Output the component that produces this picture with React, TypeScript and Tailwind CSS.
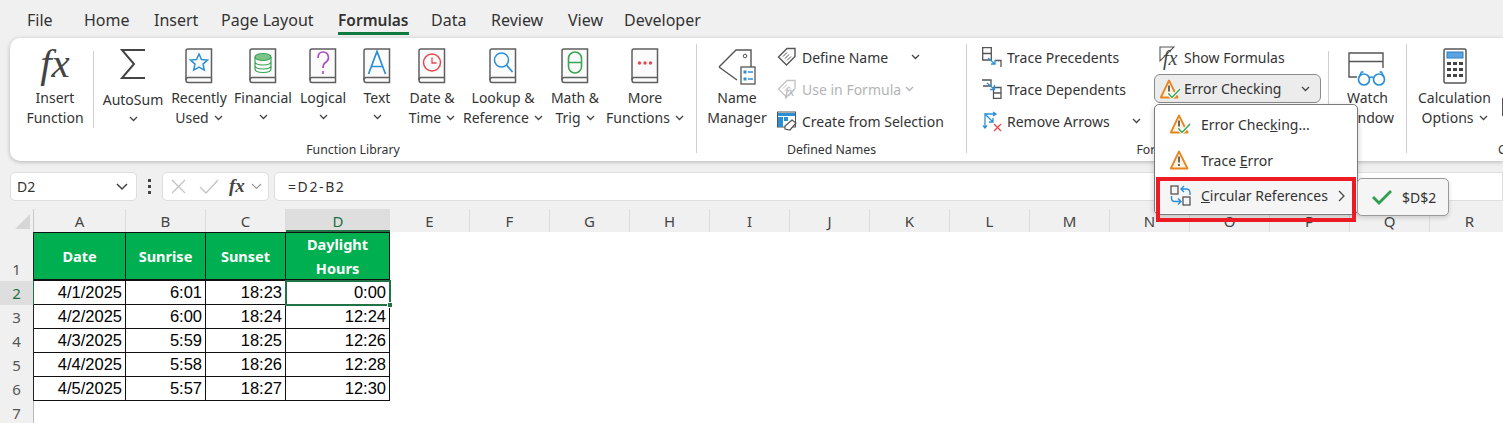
import { FC, ReactNode } from 'react'

const Chev: FC<{ className?: string }> = ({ className = '' }) => (
  <svg width="9" height="6" viewBox="0 0 9 6" className={`inline-block ${className}`}>
    <path d="M1 1l3.5 3.5L8 1" fill="none" stroke="#444" strokeWidth="1.3" />
  </svg>
)

const Book: FC<{ children: ReactNode }> = ({ children }) => (
  <svg width="28" height="36" viewBox="0 0 28 36">
    <path d="M3 1H26.5V34.5H3Q1 34.5 1 32V3Q1 1 3 1Z" fill="#fbfbfb" stroke="#5f5f5f" strokeWidth="1.5" />
    <path d="M1 32Q1 29.500 3 29.500H26.500" fill="none" stroke="#5f5f5f" strokeWidth="1.5" />
    {children}
  </svg>
)

const Warn: FC<{ check?: boolean }> = ({ check }) => (
  <svg width="22" height="20" viewBox="0 0 22 20">
    <path d="M9 1.500L17.500 18.500H.8Z" fill="#fdf3e3" stroke="#e8851e" strokeWidth="1.800" strokeLinejoin="round" />
    <path d="M9 6.500V12.500M9 14V16" stroke="#444" strokeWidth="1.600" />
    {check && <path d="M8.500 14.500l3.500 4 8-8.500" fill="none" stroke="#fff" strokeWidth="3.500" />}
    {check && <path d="M8.500 14.500l3.500 4 8-8.500" fill="none" stroke="#3aa655" strokeWidth="1.500" />}
  </svg>
)

const TagIcon: FC<{ gray?: boolean }> = ({ gray }) => (
  <svg width="20" height="20" viewBox="0 0 20 20">
    <path d="M1.500 10L10 1.500H18V9.500L9.500 18Z" fill="none" stroke={gray ? '#c4c4c4' : '#555'} strokeWidth="1.400" />
    <path d="M6 9.500l4-4M8 11.500l4-4M10 13.500l4-4" stroke={gray ? '#c4c4c4' : '#555'} strokeWidth="1" />
  </svg>
)

const TraceP = () => (
  <svg width="20" height="20" viewBox="0 0 20 20">
    <path d="M.7.7H9.300V13H.7ZM.7 6.500H9.300" fill="#fff" stroke="#555" strokeWidth="1.300" />
    <path d="M13 13.500H19V20" fill="none" stroke="#555" strokeWidth="1.300" />
    <path d="M6 11l7 6M13 13v4H9" fill="none" stroke="#2b8fd8" strokeWidth="1.300" />
  </svg>
)

const TraceD = () => (
  <svg width="20" height="20" viewBox="0 0 20 20">
    <path d="M0 1H9V7H1" fill="none" stroke="#555" strokeWidth="1.300" />
    <path d="M11.500 8.500H19V19.500H11.500ZM11.500 14H19" fill="#fff" stroke="#555" strokeWidth="1.300" />
    <path d="M5 4l7 6M12.500 6v4.500H8" fill="none" stroke="#2b8fd8" strokeWidth="1.300" />
  </svg>
)

const RemoveArrows = () => (
  <svg width="21" height="21" viewBox="0 0 21 21">
    <path d="M3 2v15M1 14.500L3 17l2-2.500M3 3h11M11 1l3 2-3 2M4 4l7 7M7 11h4V7" fill="none" stroke="#2b8fd8" strokeWidth="1.300" />
    <path d="M12 13l7 7M19 13l-7 7" stroke="#e5484d" strokeWidth="1.400" />
  </svg>
)

const Circular = () => (
  <svg width="21" height="21" viewBox="0 0 21 21">
    <rect x="1" y="1" width="7" height="8" fill="none" stroke="#555" strokeWidth="1.300" />
    <rect x="13" y="12" width="7" height="8" fill="none" stroke="#555" strokeWidth="1.300" />
    <path d="M14 1L11 4l3 3M11.500 4H16Q20 4 20 8V10M8 19.500l3-3-3-3M10.500 16.500H5Q1.500 16.500 1.500 13V11" fill="none" stroke="#2b8fd8" strokeWidth="1.400" />
  </svg>
)

const LargeBtn: FC<{ w: number; icon: ReactNode; lines: string[]; chev?: 'inline' | 'below'; low?: boolean }> = ({ w, icon, lines, chev, low }) => (
  <div style={{ width: w }} className="shrink-0 flex flex-col items-center text-[14px] leading-[20px] whitespace-nowrap">
    <div className={`${low ? 'h-[52px]' : 'h-[50px]'} pt-[10px] flex justify-center`}>{icon}</div>
    {lines.map((l, i) => (
      <div key={l}>
        {l}
        {chev === 'inline' && i === lines.length - 1 && <Chev className="ml-[5px] mb-[2px]" />}
      </div>
    ))}
    {chev === 'below' && <Chev className="mt-[6px]" />}
  </div>
)

const SmallBtn: FC<{ w: number; icon: ReactNode; label: string; gray?: boolean; chevAt?: number }> = ({ w, icon, label, gray, chevAt }) => (
  <div style={{ width: w }} className={`h-[32px] flex items-center text-[14px] whitespace-nowrap ${gray ? 'text-[#b4b4b4]' : ''}`}>
    <div className="w-[25px] shrink-0 flex items-center">{icon}</div>
    <span style={{ width: chevAt }} className="shrink-0">{label}</span>
    {chevAt !== undefined && <Chev className={gray ? 'opacity-40' : ''} />}
  </div>
)

const Divider: FC<{ short?: boolean }> = ({ short }) => (
  <div className={`w-px shrink-0 bg-[#cfcfcf] ${short ? 'h-[77px] mt-[13px]' : 'h-[109px] mt-[6px]'}`} />
)

const GroupLabel: FC<{ children: ReactNode }> = ({ children }) => (
  <div className="absolute left-0 right-0 top-[104px] text-center text-[12.300px] leading-[16px]">{children}</div>
)

const tabs = [
  ['File', 'w-[57px]'],
  ['Home', 'w-[70px]'],
  ['Insert', 'w-[67px]'],
  ['Page Layout', 'w-[117px]'],
  ['Formulas', 'w-[93px]'],
  ['Data', 'w-[60px]'],
  ['Review', 'w-[77px]'],
  ['View', 'w-[56px]'],
  ['Developer', 'w-[90px]'],
]

const columns = ['E', 'F', 'G', 'H', 'I', 'J', 'K', 'L', 'M', 'N', 'O', 'P', 'Q', 'R']

const rows = [
  ['2', '4/1/2025', '6:01', '18:23', '0:00'],
  ['3', '4/2/2025', '6:00', '18:24', '12:24'],
  ['4', '4/3/2025', '5:59', '18:25', '12:26'],
  ['5', '4/4/2025', '5:58', '18:26', '12:28'],
  ['6', '4/5/2025', '5:57', '18:27', '12:30'],
]

const cellWidths = ['w-[92px]', 'w-[80px]', 'w-[80px]', 'w-[104px]']

const App: FC = () => {
  return (
    <div className="relative w-[1503px] h-[423px] overflow-hidden bg-[#f0f0f0] text-[#333] font-['Noto_Sans',sans-serif]">
      {/* tabs */}
      <div className="h-[38px] pl-[27px] flex text-[16px] leading-[40px]">
        {tabs.map(([t, w]) => (
          <div key={t} className={`${w} shrink-0 whitespace-nowrap`}>
            {t === 'Formulas' ? (
              <span className="relative inline-block font-semibold text-[15.500px]">
                {t}
                <span className="absolute left-0 right-0 top-[32px] h-[3px] bg-[#0f7b3f]" />
              </span>
            ) : (
              t
            )}
          </div>
        ))}
      </div>

      {/* ribbon */}
      <div className="ml-[10px] h-[123px] bg-white rounded-l-[10px] shadow-[0_1px_4px_rgba(0,0,0,0.25)] flex overflow-hidden">
        <div className="relative shrink-0 w-[686px] flex pl-[7px]">
          <LargeBtn
            w={76}
            lines={['Insert', 'Function']}
            icon={<span className="font-['Liberation_Serif',serif] italic text-[41px] leading-[30px] text-[#444]">fx</span>}
          />
          <Divider short />
          <div className="w-[2px]" />
          <LargeBtn
            w={74}
            low
            lines={['AutoSum']}
            chev="below"
            icon={
              <svg width="28" height="32" viewBox="0 0 28 32">
                <path d="M26 2H3L15 16L3 30H26" fill="none" stroke="#444" strokeWidth="2" />
              </svg>
            }
          />
          <LargeBtn
            w={58}
            lines={['Recently', 'Used']}
            chev="inline"
            icon={
              <Book>
                <path d="M14 6l2.500 5.500 6 .6-4.500 4 1.300 6-5.300-3.100-5.300 3.100 1.300-6-4.500-4 6-.6Z" fill="none" stroke="#2b8fd8" strokeWidth="1.500" />
              </Book>
            }
          />
          <LargeBtn
            w={70}
            lines={['Financial']}
            chev="below"
            icon={
              <Book>
                <ellipse cx="14" cy="9" rx="8" ry="3.500" fill="#7cc48a" stroke="#3aa655" strokeWidth="1.200" />
                <path d="M6 9v12Q6 24.500 14 24.500T22 21V9M6 13.500Q6 17 14 17T22 13.500M6 17.500Q6 21 14 21T22 17.500" fill="none" stroke="#3aa655" strokeWidth="1.200" />
              </Book>
            }
          />
          <LargeBtn
            w={50}
            lines={['Logical']}
            chev="below"
            icon={
              <Book>
                <path d="M9 10Q9 4 14 4T19.500 9.500Q19.500 12.500 16.500 14.500Q14 16 14 20M14 23V26" fill="none" stroke="#ab4fc6" strokeWidth="1.700" />
              </Book>
            }
          />
          <LargeBtn
            w={58}
            lines={['Text']}
            chev="below"
            icon={
              <Book>
                <path d="M5.500 26L14 3.500L22.500 26M8.500 18.500H19.500" fill="none" stroke="#2b8fd8" strokeWidth="1.700" />
              </Book>
            }
          />
          <LargeBtn
            w={52}
            lines={['Date &', 'Time']}
            chev="inline"
            icon={
              <Book>
                <circle cx="14" cy="14.500" r="8.500" fill="none" stroke="#e5484d" strokeWidth="1.500" />
                <path d="M14 9.500V15H18.500" fill="none" stroke="#e5484d" strokeWidth="1.300" />
              </Book>
            }
          />
          <LargeBtn
            w={90}
            lines={['Lookup &', 'Reference']}
            chev="inline"
            icon={
              <Book>
                <circle cx="12.500" cy="12" r="7" fill="none" stroke="#2b8fd8" strokeWidth="1.500" />
                <path d="M17.500 17l6 7" stroke="#2b8fd8" strokeWidth="1.700" />
              </Book>
            }
          />
          <LargeBtn
            w={54}
            lines={['Math &', 'Trig']}
            chev="inline"
            icon={
              <Book>
                <rect x="7.500" y="4" width="13" height="21" rx="6.500" fill="none" stroke="#3aa655" strokeWidth="1.600" />
                <path d="M8 14.500H20" stroke="#3aa655" strokeWidth="1.500" />
              </Book>
            }
          />
          <LargeBtn
            w={86}
            lines={['More', 'Functions']}
            chev="inline"
            icon={
              <Book>
                <circle cx="8.500" cy="15" r="1.700" fill="#e5484d" />
                <circle cx="14" cy="15" r="1.700" fill="#e5484d" />
                <circle cx="19.500" cy="15" r="1.700" fill="#e5484d" />
              </Book>
            }
          />
          <GroupLabel>Function Library</GroupLabel>
        </div>
        <Divider />

        <div className="relative shrink-0 w-[269px] flex">
          <LargeBtn
            w={80}
            lines={['Name', 'Manager']}
            icon={
              <svg width="40" height="38" viewBox="0 0 40 38" className="-mt-[1px]">
                <path d="M2 20L19 3H34V20M20 33L2 20" fill="none" stroke="#555" strokeWidth="1.400" />
                <circle cx="28" cy="9" r="1.800" fill="none" stroke="#555" />
                <rect x="24" y="20" width="14" height="17" fill="#fff" stroke="#555" strokeWidth="1.300" />
                <path d="M26.500 25h3M26.500 32h3" stroke="#2b8fd8" strokeWidth="3" />
                <path d="M31 25h5M31 32h5" stroke="#2b8fd8" strokeWidth="1.300" />
              </svg>
            }
          />
          <div className="pt-[3px]">
            <SmallBtn w={189} icon={<TagIcon />} label="Define Name" chevAt={109} />
            <SmallBtn
              w={189}
              gray
              icon={
                <div className="relative">
                  <TagIcon gray />
                  <span className="absolute left-[8px] top-[5px] font-['Liberation_Serif',serif] italic text-[13px] leading-[16px] text-[#b4b4b4]">fx</span>
                </div>
              }
              label="Use in Formula"
              chevAt={103}
            />
            <SmallBtn
              w={189}
              label="Create from Selection"
              icon={
                <svg width="20" height="20" viewBox="0 0 20 20">
                  <rect x="0.500" y="1" width="18" height="15" fill="#fff" stroke="#555" />
                  <path d="M1 2h17v3H1ZM1 6h5v10H1ZM7 6h4v4H7Z" fill="#2b8fd8" />
                  <path d="M8 15l7-6 4 3-6 7-5-1Z" fill="#fff" stroke="#555" strokeWidth="1.200" />
                </svg>
              }
            />
          </div>
          <GroupLabel>Defined Names</GroupLabel>
        </div>
        <Divider />

        <div className="relative shrink-0 w-[439px] flex pl-[15px]">
          <div className="pt-[3px]">
            <SmallBtn w={172} icon={<TraceP />} label="Trace Precedents" />
            <SmallBtn w={172} icon={<TraceD />} label="Trace Dependents" />
            <SmallBtn w={172} icon={<RemoveArrows />} label="Remove Arrows" chevAt={125} />
          </div>
          <div className="w-[167px] pt-[3px]">
            <div className="h-[32px] flex items-center pl-[5px] text-[14px] whitespace-nowrap">
              <div className="relative w-[25px] h-[22px] shrink-0">
                <svg width="16" height="18" viewBox="0 0 16 18">
                  <path d="M1 1H15L1 15Z" fill="none" stroke="#555" strokeWidth="1.100" />
                </svg>
                <span className="absolute left-[4px] top-[2px] font-['Liberation_Serif',serif] italic text-[20px] leading-[20px] text-[#444]">fx</span>
              </div>
              <span>Show Formulas</span>
            </div>
            <div className="h-[29px] mt-[1px] flex items-center pl-[5px] pr-[10px] bg-[#ececec] border border-[#8a8a8a] rounded-[6px] text-[14px] whitespace-nowrap">
              <div className="w-[24px] shrink-0 flex">
                <Warn check />
              </div>
              <span className="grow">Error Checking</span>
              <Chev />
            </div>
          </div>
          <div className="w-[7px]" />
          <Divider short />
          <LargeBtn
            w={77}
            lines={['Watch', 'Window']}
            icon={
              <svg width="40" height="35" viewBox="0 0 40 35" className="mt-[4px]">
                <path d="M9 25H1V1H35V16M1 9.500H35" fill="none" stroke="#555" strokeWidth="1.400" />
                <circle cx="16" cy="27.500" r="5.500" fill="#fff" stroke="#2b8fd8" strokeWidth="1.700" />
                <circle cx="31" cy="27.500" r="5.500" fill="#fff" stroke="#2b8fd8" strokeWidth="1.700" />
                <path d="M21 26q2.500-2 5 0M11 25l2.500-5h2M36 25l-2.500-5h-2" fill="none" stroke="#2b8fd8" strokeWidth="1.500" />
              </svg>
            }
          />
          <GroupLabel>Formula Auditing</GroupLabel>
        </div>
        <Divider />

        <div className="relative shrink-0 w-[246px] flex">
          <LargeBtn
            w={95}
            lines={['Calculation', 'Options']}
            chev="inline"
            icon={
              <svg width="24" height="36" viewBox="0 0 24 36">
                <rect x="1" y="1" width="22" height="34" rx="1.500" fill="#fff" stroke="#555" strokeWidth="1.500" />
                <rect x="4" y="4" width="16" height="6" fill="#5aa5e0" stroke="#2b7cc0" />
                <path d="M4 14h4v3H4ZM10 14h4v3h-4ZM16 14h4v3h-4ZM4 20h4v3H4ZM10 20h4v3h-4ZM16 20h4v3h-4ZM4 26h4v3H4ZM10 26h4v3h-4ZM16 26h4v3h-4Z" fill="#444" />
              </svg>
            }
          />
          <div className="w-[14px] h-[18px] mt-[60px] border border-[#555]" />
          <GroupLabel>Calculation</GroupLabel>
        </div>
      </div>

      {/* formula bar */}
      <div className="mt-[11px] h-[29px] flex items-center text-[14px]">
        <div className="ml-[10px] w-[127px] h-[29px] bg-white border border-[#dedede] rounded-[5px] flex items-center justify-between pl-[6px] pr-[8px]">
          <span>D2</span>
          <svg width="12" height="8" viewBox="0 0 12 8">
            <path d="M1 1l5 5 5-5" fill="none" stroke="#444" strokeWidth="1.500" />
          </svg>
        </div>
        <div className="w-[25px] flex flex-col items-center gap-[3px]">
          <div className="w-[3px] h-[3px] bg-[#444]" />
          <div className="w-[3px] h-[3px] bg-[#444]" />
          <div className="w-[3px] h-[3px] bg-[#444]" />
        </div>
        <div className="w-[107px] h-[29px] bg-white border border-[#dedede] rounded-[5px] flex items-center pl-[8px] pr-[2px]">
          <svg width="15" height="15" viewBox="0 0 15 15">
            <path d="M1 1l13 13M14 1L1 14" stroke="#c4c4c4" strokeWidth="1.300" />
          </svg>
          <svg width="20" height="15" viewBox="0 0 20 15" className="ml-[13px]">
            <path d="M1 8l6 6L19 1" fill="none" stroke="#c4c4c4" strokeWidth="1.300" />
          </svg>
          <span className="ml-[10px] font-['Liberation_Serif',serif] italic font-bold text-[19px] text-[#444]">fx</span>
          <svg width="11" height="7" viewBox="0 0 11 7" className="ml-[6px]">
            <path d="M1 1l4.500 4.500L10 1" fill="none" stroke="#999" strokeWidth="1.200" />
          </svg>
        </div>
        <div className="ml-[5px] grow h-[29px] bg-white border border-[#dedede] rounded-l-[5px] flex items-center pl-[13px] tracking-[1.600px]">
          =D2-B2
        </div>
      </div>

      {/* sheet */}
      <div className="mt-[8px] bg-white">
        <div className="h-[23px] flex bg-[#f0f0f0] text-[15px] text-[#444] leading-[24px] text-center">
          <div className="w-[34px] shrink-0 border-r border-[#c8c8c8] flex items-end justify-end p-[3px]">
            <div className="w-0 h-0 border-l-[15px] border-l-transparent border-b-[15px] border-b-[#d6d6d6]" />
          </div>
          {['A', 'B', 'C'].map((c, i) => (
            <div key={c} className={`${cellWidths[i]} shrink-0 border-r border-[#dcdcdc]`}>{c}</div>
          ))}
          <div className="w-[104px] shrink-0 bg-[#dedede] border-b-2 border-[#217346] text-[#1f6e43]">D</div>
          {columns.map((c) => (
            <div key={c} className="w-[80px] shrink-0 border-r border-[#dcdcdc]">{c}</div>
          ))}
        </div>

        <div className="flex h-[49px]">
          <div className="w-[34px] shrink-0 bg-[#f0f0f0] border-r border-[#222] text-[15px] text-[#555] text-center flex items-end justify-center pb-[1px]">1</div>
          {[['Date'], ['Sunrise'], ['Sunset'], ['Daylight', 'Hours']].map((h, i) => (
            <div
              key={h[0]}
              className={`${cellWidths[i]} shrink-0 bg-[#00b050] border-r border-t border-b-2 border-[#111] text-white font-bold text-[14.500px] leading-[24px] flex flex-col items-center justify-center`}
            >
              {h.map((t) => (
                <div key={t}>{t}</div>
              ))}
            </div>
          ))}
        </div>

        {rows.map((r, idx) => (
          <div key={r[0]} className="flex h-[24px]">
            <div className={`w-[34px] shrink-0 border-r text-[15px] leading-[24px] text-center ${idx === 0 ? 'bg-[#dedede] border-[#217346] text-[#1f6e43]' : 'bg-[#f0f0f0] border-[#222] text-[#555]'}`}>
              {r[0]}
            </div>
            {r.slice(1).map((v, i) => (
              <div
                key={i}
                className={`${cellWidths[i]} shrink-0 border-r border-b border-[#111] pr-[3px] text-right text-black text-[16.500px] leading-[23px] font-['Liberation_Sans',sans-serif]`}
              >
                {v}
              </div>
            ))}
          </div>
        ))}

        <div className="w-[34px] h-[24px] bg-[#f0f0f0] border-r border-[#b8b8b8] text-[15px] leading-[24px] text-[#555] text-center">7</div>
      </div>

      {/* active cell */}
      <div className="absolute left-[285px] top-[280px] w-[106px] h-[26px] border-2 border-[#217346]">
        <div className="absolute right-[-4px] bottom-[-4px] w-[6px] h-[6px] bg-[#217346] border border-white" />
      </div>

      {/* error checking menu */}
      <div className="absolute left-[1154px] top-[104px] w-[204px] h-[111px] bg-white border border-[#7a7a7a] rounded-[5px] shadow-[0_2px_6px_rgba(0,0,0,0.2)] text-[14px] pt-[1px]">
        <div className="h-[36px] flex items-center pl-[15px]">
          <div className="w-[31px] shrink-0 flex"><Warn check /></div>
          <span>Error Chec<u>k</u>ing...</span>
        </div>
        <div className="h-[36px] flex items-center pl-[15px]">
          <div className="w-[31px] shrink-0 flex"><Warn /></div>
          <span>Trace <u>E</u>rror</span>
        </div>
        <div className="h-[35px] mx-[3px] flex items-center pl-[12px] bg-[#f5f5f5]">
          <div className="w-[31px] shrink-0 flex"><Circular /></div>
          <span className="grow"><u>C</u>ircular References</span>
          <svg width="8" height="12" viewBox="0 0 8 12" className="mr-[8px]">
            <path d="M1 1l5 5-5 5" fill="none" stroke="#444" strokeWidth="1.200" />
          </svg>
        </div>
      </div>

      {/* red highlight around the menu row */}
      <div className="absolute left-[1156px] top-[177px] w-[200px] h-[45px] border-[4px] border-[#ed1c24]" />

      {/* submenu */}
      <div className="absolute left-[1357px] top-[178px] w-[92px] h-[38px] bg-[#f5f5f5] border border-[#9a9a9a] rounded-[5px] shadow-[0_2px_4px_rgba(0,0,0,0.15)] flex items-center pl-[13px] text-[14px]">
        <svg width="22" height="16" viewBox="0 0 22 16">
          <path d="M2 8l6 6L20 2" fill="none" stroke="#2e9e4f" strokeWidth="2.800" />
        </svg>
        <span className="ml-[9px]">$D$2</span>
      </div>
    </div>
  )
}

export default App
